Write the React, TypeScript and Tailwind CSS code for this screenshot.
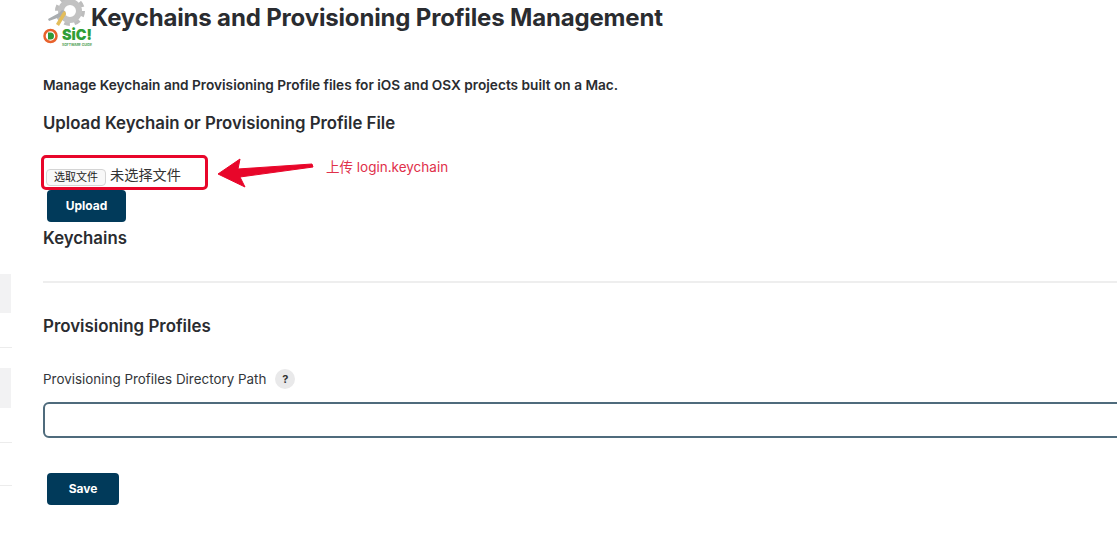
import React from "react";

const font = { fontFamily: 'Inter, "Noto Sans CJK SC", sans-serif' };

function Logo() {
  return (
    <svg width="50" height="47" viewBox="0 0 50 47" className="shrink-0">
      <circle cx="27" cy="11" r="13" fill="none" stroke="#bdbdbd" strokeWidth="4" strokeDasharray="5.600 4.610" />
      <circle cx="27" cy="11" r="9" fill="none" stroke="#c2c2c2" strokeWidth="6" />
      <path d="M5 19l11-6 3-3 3 1 1 3-2 3-4 0-11 4z" fill="#a9adb0" />
      <path d="M20 12l2-1 1 3-7 12-3-2z" fill="#e3bd5a" />
      <circle cx="7.500" cy="36" r="6" fill="#fff" stroke="#e8622c" strokeWidth="2.500" />
      <path d="M5 32.500h2.500a3.500 3.500 0 0 1 0 7H5z" fill="#2f9a3a" />
      <text x="19" y="40" fontSize="15" fontWeight="900" fill="#2f9e36" textLength="30" lengthAdjust="spacingAndGlyphs">SiC!</text>
      <text x="19" y="46" fontSize="3" fontWeight="700" fill="#4c9c50" textLength="30" lengthAdjust="spacingAndGlyphs">SOFTWARE GUIDE</text>
    </svg>
  );
}

export default function App() {
  return (
    <div style={font} className="relative h-[551px] w-[1117px] overflow-hidden bg-white text-[#2a2c30]">
      <div className="absolute left-0 top-[274px] h-[39px] w-[11px] bg-[#f2f2f3]" />
      <div className="absolute left-0 top-[347px] h-px w-[12px] bg-[#ececec]" />
      <div className="absolute left-0 top-[368px] h-[40px] w-[11px] bg-[#f2f2f3]" />
      <div className="absolute left-0 top-[442px] h-px w-[12px] bg-[#ececec]" />
      <div className="absolute left-0 top-[485px] h-px w-[12px] bg-[#ececec]" />

      <div className="flex h-[44px] items-start pl-[43px]">
        <Logo />
        <h1 className="-ml-[2px] mt-[3px] text-[24px] leading-[30px] font-bold tracking-[-0.165px] whitespace-nowrap">Keychains and Provisioning Profiles Management</h1>
      </div>

      <div className="pl-[43px]">
        <p className="mt-[33px] text-[13.670px] leading-[17px] font-semibold whitespace-nowrap">Manage Keychain and Provisioning Profile files for iOS and OSX projects built on a Mac.</p>
        <h2 className="mt-[18px] text-[16.800px] leading-[22px] font-semibold">Upload Keychain or Provisioning Profile File</h2>

        <div className="mt-[21px] flex items-center">
          <div className="flex h-[35px] w-[167px] -ml-[2px] items-center rounded-[5px] border-[3px] border-[#e8062a] pl-[2px] pt-[9px]">
            <span className="flex h-[17px] w-[60px] items-center justify-center rounded-[4px] border border-[#d4d4d4] bg-[#f8f8f8] text-[11px] text-[#222]">选取文件</span>
            <span className="mb-[5px] ml-[4px] text-[14.200px] text-[#333]">未选择文件</span>
          </div>
          <svg width="98" height="32" viewBox="0 0 98 32" className="ml-[10px] shrink-0">
            <path d="M0 17L22 2l-2 10 74-5 1 3-73 10 5 10z" fill="#e8062a" stroke="#e8062a" strokeLinejoin="round" />
          </svg>
          <span className="mb-[10px] ml-[10px] text-[13.500px] text-[#e0304a] whitespace-nowrap">上传 login.keychain</span>
        </div>

        <button className="ml-[4px] block h-[32px] w-[79px] rounded-[4px] bg-[#013a5a] text-[12px] font-bold text-white">Upload</button>
        <h2 className="mt-[5px] text-[16.800px] leading-[22px] font-semibold">Keychains</h2>

        <div className="mt-[32px] h-[2px] bg-[#eeeeee]" />

        <h2 className="mt-[32px] text-[16.900px] leading-[22px] font-semibold">Provisioning Profiles</h2>

        <div className="mt-[32px] flex items-center">
          <span className="text-[13.420px] leading-[20px] text-[#33363a]">Provisioning Profiles Directory Path</span>
          <span className="ml-[9px] flex h-[20px] w-[20px] items-center justify-center rounded-full bg-[#e9e9ea] text-[11px] font-bold text-[#333]">?</span>
        </div>

        <div className="mt-[13px] h-[36px] w-[1090px] rounded-[6px] border-2 border-[#4f6b7c] bg-white" />

        <button className="ml-[4px] mt-[35px] block h-[32px] w-[72px] rounded-[4px] bg-[#013a5a] text-[12px] font-bold text-white">Save</button>
      </div>
    </div>
  );
}
